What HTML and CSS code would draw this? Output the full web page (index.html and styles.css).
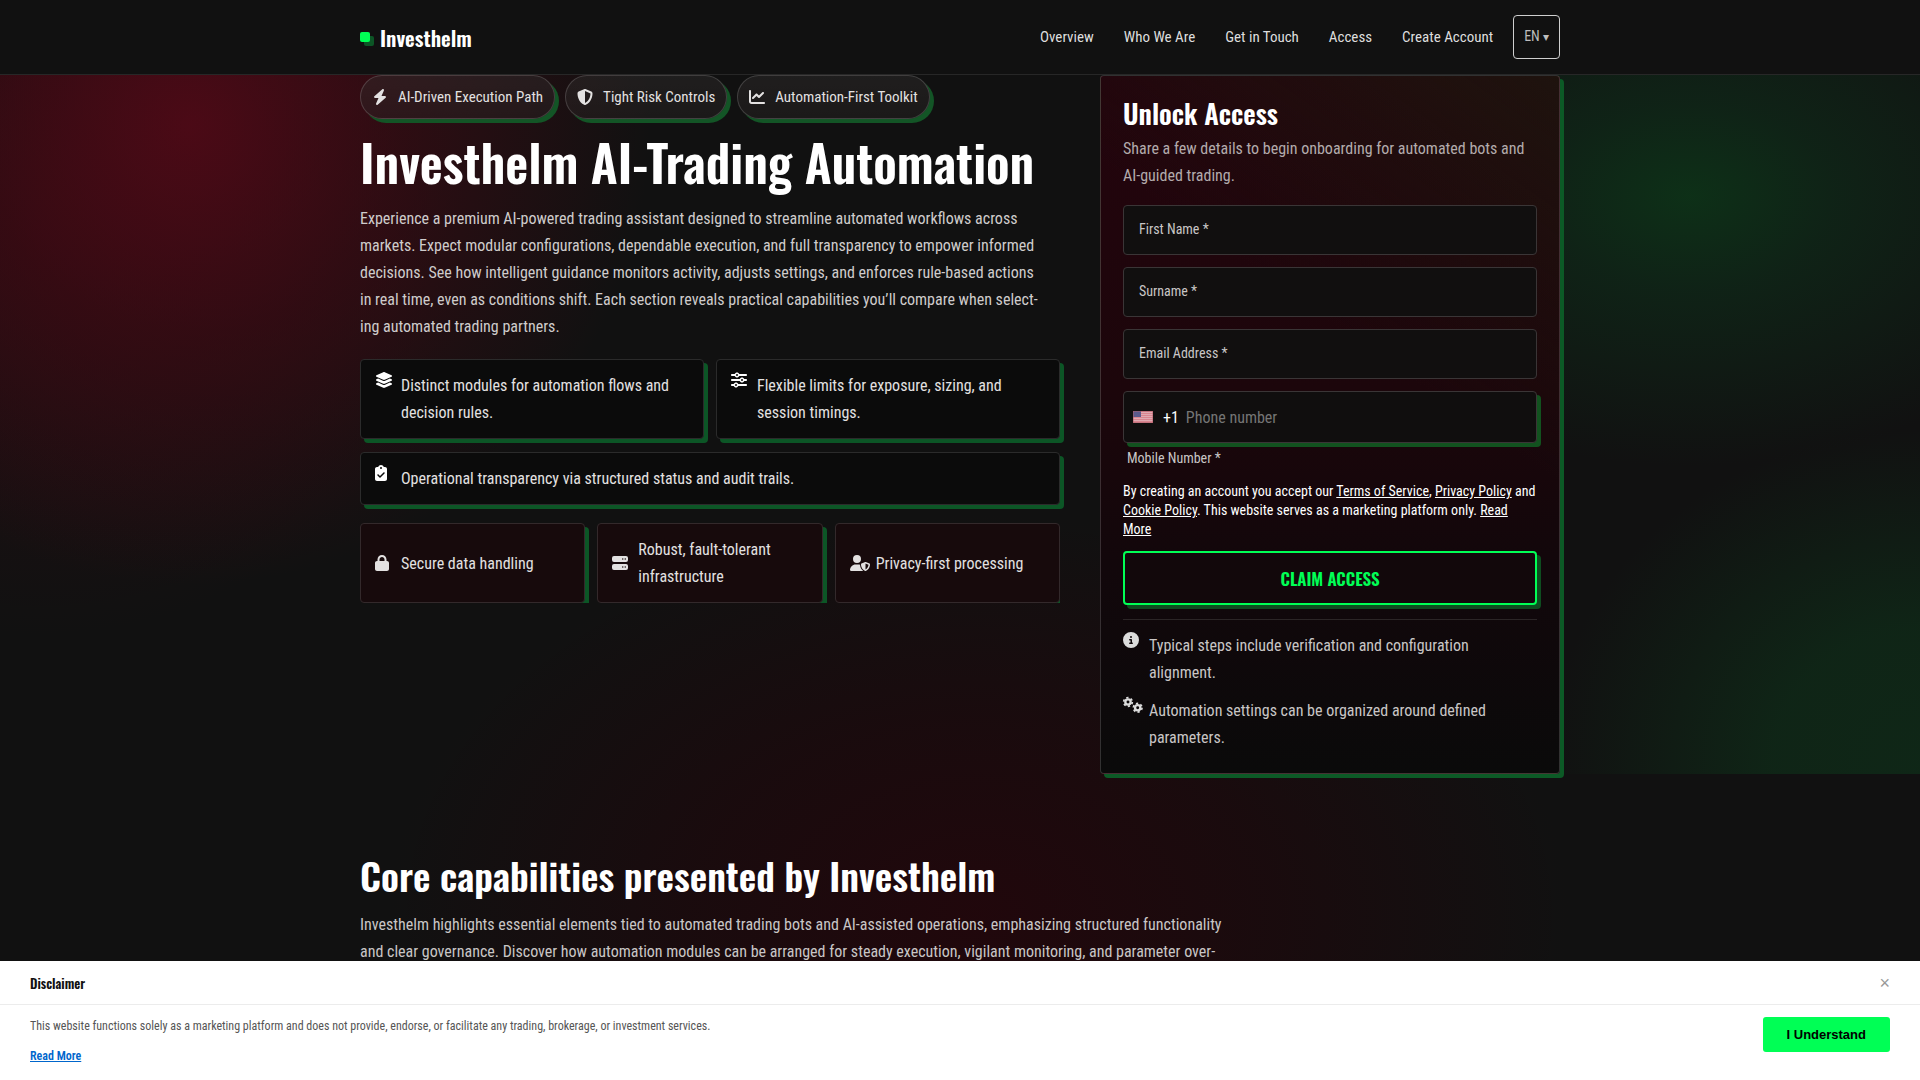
FILE: index.html
```html
<!DOCTYPE html>
<html lang="en">
<head>
    <meta charset="UTF-8">
    <meta name="viewport" content="width=device-width, initial-scale=1.0">
    <title>Investhelm</title>
    <link rel="stylesheet" href="styles.css">
</head>
<body>
    <header class="site-header">
        <div class="container header-inner">
            <a class="brand" href="#"><span class="brand-mark"></span>Investhelm</a>
            <nav class="main-nav">
                <a href="#">Overview</a>
                <a href="#">Who We Are</a>
                <a href="#">Get in Touch</a>
                <a href="#">Access</a>
                <a href="#">Create Account</a>
                <button class="lang-btn" type="button">EN <span class="caret">▾</span></button>
            </nav>
        </div>
    </header>

    <main>
        <section class="hero">
            <div class="container hero-grid">
                <div class="hero-text">
                    <ul class="chips">
                        <li class="chip">
                            <svg class="icon" viewBox="0 0 448 512"><path d="M349.4 44.6c5.9-13.7 1.5-29.7-10.6-38.5s-28.6-8-39.9 1.8l-256 224c-10 8.8-13.6 22.9-8.9 35.3S50.7 288 64 288H175.5L98.6 467.4c-5.9 13.7-1.5 29.7 10.6 38.5s28.6 8 39.9-1.8l256-224c10-8.8 13.6-22.9 8.9-35.3s-16.6-20.7-30-20.7H272.5L349.4 44.6z"/></svg>
                            AI-Driven Execution Path
                        </li>
                        <li class="chip">
                            <svg class="icon" viewBox="0 0 512 512"><path d="M256 0c4.6 0 9.2 1 13.4 2.9L457.7 82.8c22 9.3 38.4 31 38.3 57.2c-.5 99.2-41.3 280.7-213.6 363.2c-16.7 8-36.1 8-52.8 0C57.3 420.7 16.5 239.2 16 140c-.1-26.2 16.3-47.9 38.3-57.2L242.7 2.9C246.8 1 251.4 0 256 0zm0 66.8V444.8C394 378 431.1 230.1 432 141.4L256 66.8l0 0z"/></svg>
                            Tight Risk Controls
                        </li>
                        <li class="chip">
                            <svg class="icon" viewBox="0 0 512 512"><path d="M64 64c0-17.7-14.3-32-32-32S0 46.3 0 64V400c0 44.2 35.8 80 80 80H480c17.7 0 32-14.3 32-32s-14.3-32-32-32H80c-8.8 0-16-7.2-16-16V64zm406.6 86.6c12.5-12.5 12.5-32.8 0-45.3s-32.8-12.5-45.3 0L320 210.7l-57.4-57.4c-12.5-12.5-32.8-12.5-45.3 0l-112 112c-12.5 12.5-12.5 32.8 0 45.3s32.8 12.5 45.3 0L240 221.3l57.4 57.4c12.5 12.5 32.8 12.5 45.3 0l128-128z"/></svg>
                            Automation-First Toolkit
                        </li>
                    </ul>

                    <h1>Investhelm AI-Trading Automation</h1>
                    <p class="lead">Experience a premium AI-powered trading assistant designed to streamline automated workflows across<br>
                        markets. Expect modular configurations, dependable execution, and full transparency to empower informed<br>
                        decisions. See how intelligent guidance monitors activity, adjusts settings, and enforces rule-based actions<br>
                        in real time, even as conditions shift. Each section reveals practical capabilities you’ll compare when select-<br>
                        ing automated trading partners.</p>

                    <ul class="features">
                        <li class="box">
                            <svg class="icon" viewBox="0 0 576 512"><path d="M264.5 5.2c14.9-6.9 32.1-6.9 47 0l218.6 101c8.5 3.9 13.9 12.4 13.9 21.8s-5.4 17.9-13.9 21.8l-218.6 101c-14.9 6.9-32.1 6.9-47 0L45.9 149.8C37.4 145.8 32 137.3 32 128s5.4-17.9 13.9-21.8L264.5 5.2zM476.9 209.6l53.2 24.6c8.5 3.9 13.9 12.4 13.9 21.8s-5.4 17.9-13.9 21.8l-218.6 101c-14.9 6.9-32.1 6.9-47 0L45.9 277.8C37.4 273.8 32 265.3 32 256s5.4-17.9 13.9-21.8l53.2-24.6 152 70.2c23.4 10.8 50.4 10.8 73.8 0l152-70.2zm-152 198.2l152-70.2 53.2 24.6c8.5 3.9 13.9 12.4 13.9 21.8s-5.4 17.9-13.9 21.8l-218.6 101c-14.9 6.9-32.1 6.9-47 0L45.9 405.8C37.4 401.8 32 393.3 32 384s5.4-17.9 13.9-21.8l53.2-24.6 152 70.2c23.4 10.8 50.4 10.8 73.8 0z"/></svg>
                            <span>Distinct modules for automation flows and decision rules.</span>
                        </li>
                        <li class="box">
                            <svg class="icon" viewBox="0 0 512 512"><path d="M0 416c0 17.7 14.3 32 32 32l54.7 0c12.3 28.3 40.5 48 73.3 48s61-19.7 73.3-48L480 448c17.7 0 32-14.3 32-32s-14.3-32-32-32l-246.7 0c-12.3-28.3-40.5-48-73.3-48s-61 19.7-73.3 48L32 384c-17.7 0-32 14.3-32 32zm128 0a32 32 0 1 1 64 0 32 32 0 1 1 -64 0zM320 256a32 32 0 1 1 64 0 32 32 0 1 1 -64 0zm32-80c-32.8 0-61 19.7-73.3 48L32 224c-17.7 0-32 14.3-32 32s14.3 32 32 32l246.7 0c12.3 28.3 40.5 48 73.3 48s61-19.7 73.3-48l54.7 0c17.7 0 32-14.3 32-32s-14.3-32-32-32l-54.7 0c-12.3-28.3-40.5-48-73.3-48zM192 128a32 32 0 1 1 0-64 32 32 0 1 1 0 64zm73.3-64C253 35.7 224.8 16 192 16s-61 19.7-73.3 48L32 64C14.3 64 0 78.3 0 96s14.3 32 32 32l86.7 0c12.3 28.3 40.5 48 73.3 48s61-19.7 73.3-48L480 128c17.7 0 32-14.3 32-32s-14.3-32-32-32L265.3 64z"/></svg>
                            <span>Flexible limits for exposure, sizing, and<br>session timings.</span>
                        </li>
                        <li class="box wide">
                            <svg class="icon" viewBox="0 0 384 512"><path d="M192 0c-41.8 0-77.4 26.7-90.5 64H64C28.7 64 0 92.7 0 128V448c0 35.3 28.7 64 64 64H320c35.3 0 64-28.7 64-64V128c0-35.3-28.7-64-64-64H282.5C269.4 26.7 233.8 0 192 0zm0 64a32 32 0 1 1 0 64 32 32 0 1 1 0-64zM305 273L177 401c-9.4 9.4-24.6 9.4-33.9 0L79 337c-9.4-9.4-9.4-24.6 0-33.9s24.6-9.4 33.9 0l47 47L271 239c9.4-9.4 24.6-9.4 33.9 0s9.4 24.6 0 33.9z"/></svg>
                            <span>Operational transparency via structured status and audit trails.</span>
                        </li>
                    </ul>

                    <ul class="trust">
                        <li class="box">
                            <svg class="icon" viewBox="0 0 448 512"><path d="M144 144v48H304V144c0-44.2-35.8-80-80-80s-80 35.8-80 80zM80 192V144C80 64.5 144.5 0 224 0s144 64.5 144 144v48h16c35.3 0 64 28.7 64 64V448c0 35.3-28.7 64-64 64H64c-35.3 0-64-28.7-64-64V256c0-35.3 28.7-64 64-64H80z"/></svg>
                            <span>Secure data handling</span>
                        </li>
                        <li class="box">
                            <svg class="icon" viewBox="0 0 512 512"><path fill-rule="evenodd" d="M64 32h384a64 64 0 0 1 64 64v64a64 64 0 0 1-64 64H64a64 64 0 0 1-64-64V96a64 64 0 0 1 64-64zm280 72a24 24 0 1 0 0 48 24 24 0 1 0 0-48zm80 0a24 24 0 1 0 0 48 24 24 0 1 0 0-48zM64 288h384a64 64 0 0 1 64 64v64a64 64 0 0 1-64 64H64a64 64 0 0 1-64-64v-64a64 64 0 0 1 64-64zm280 72a24 24 0 1 0 0 48 24 24 0 1 0 0-48zm80 0a24 24 0 1 0 0 48 24 24 0 1 0 0-48z"/></svg>
                            <span>Robust, fault-tolerant infrastructure</span>
                        </li>
                        <li class="box">
                            <svg class="icon" viewBox="0 0 640 512"><path d="M224 256A128 128 0 1 0 224 0a128 128 0 1 0 0 256zm-45.7 48C79.8 304 0 383.8 0 482.3C0 498.7 13.3 512 29.7 512H418.3c1.8 0 3.5-.2 5.3-.5c-76.3-55.1-99.8-141-103.1-200.2c-16.1-4.8-33.1-7.3-50.7-7.3H178.3zm308.8-78.3l-120 48C358 277.4 352 286.2 352 296c0 63.3 25.9 168.8 134.8 214.2c5.9 2.5 12.6 2.5 18.5 0C614.1 464.8 640 359.3 640 296c0-9.8-6-18.6-15.1-22.3l-120-48c-5.7-2.3-12.1-2.3-17.8 0zM591.4 312c-3.9 50.7-27.2 116.7-95.4 149.7V273.8L591.4 312z"/></svg>
                            <span>Privacy-first processing</span>
                        </li>
                    </ul>
                </div>

                <aside class="card">
                    <h2>Unlock Access</h2>
                    <p class="card-intro">Share a few details to begin onboarding for automated bots and<br>AI-guided trading.</p>

                    <form>
                        <div class="field">
                            <input type="text" id="first-name">
                            <label for="first-name">First Name *</label>
                        </div>
                        <div class="field">
                            <input type="text" id="surname">
                            <label for="surname">Surname *</label>
                        </div>
                        <div class="field">
                            <input type="email" id="email">
                            <label for="email">Email Address *</label>
                        </div>
                        <div class="phone">
                            <svg class="flag" viewBox="0 0 20 12">
                                <rect width="20" height="12" fill="#d9858f"/>
                                <path d="M0 1.5h20M0 3.5h20M0 5.5h20M0 7.5h20M0 9.5h20" stroke="#e0aab2" stroke-width="1"/>
                                <rect width="8" height="6" fill="#5b5a8c"/>
                                <path d="M0 0h20v12H0z" fill="none" stroke="#b0616d" stroke-width="1"/>
                            </svg>
                            <span class="dial">+1</span>
                            <input type="tel" id="phone" placeholder="Phone number">
                        </div>
                        <label class="phone-label" for="phone">Mobile Number *</label>

                        <p class="legal">By creating an account you accept our <a href="#">Terms of Service</a>, <a href="#">Privacy Policy</a> and <a href="#">Cookie Policy</a>. This website serves as a marketing platform only. <a href="#">Read<br>More</a></p>
                        <button class="submit" type="button">CLAIM ACCESS</button>
                    </form>

                    <ul class="notes">
                        <li>
                            <svg class="icon" viewBox="0 0 512 512"><path d="M256 512A256 256 0 1 0 256 0a256 256 0 1 0 0 512zM216 336h24V272H216c-13.3 0-24-10.7-24-24s10.7-24 24-24h48c13.3 0 24 10.7 24 24v88h8c13.3 0 24 10.7 24 24s-10.7 24-24 24H216c-13.3 0-24-10.7-24-24s10.7-24 24-24zm40-208a32 32 0 1 1 0 64 32 32 0 1 1 0-64z"/></svg>
                            <span>Typical steps include verification and configuration<br>alignment.</span>
                        </li>
                        <li>
                            <svg class="icon gears" viewBox="0 0 640 512">
                                <circle cx="160" cy="160" r="85"/>
                                <circle class="teeth" cx="160" cy="160" r="138" pathLength="12"/>
                                <circle cx="470" cy="345" r="85"/>
                                <circle class="teeth" cx="470" cy="345" r="138" pathLength="12"/>
                            </svg>
                            <span>Automation settings can be organized around defined<br>parameters.</span>
                        </li>
                    </ul>
                </aside>
            </div>
        </section>

        <section class="core">
            <div class="container">
                <h2>Core capabilities presented by Investhelm</h2>
                <p>Investhelm highlights essential elements tied to automated trading bots and AI-assisted operations, emphasizing structured functionality<br>
                    and clear governance. Discover how automation modules can be arranged for steady execution, vigilant monitoring, and parameter over-</p>
            </div>
        </section>
    </main>

    <!-- Disclaimer bar -->
    <div class="disclaimer">
        <div class="disclaimer-head">
            <h3>Disclaimer</h3>
            <button class="close-btn" type="button" aria-label="Close">×</button>
        </div>
        <div class="disclaimer-body">
            <div>
                <p>This website functions solely as a marketing platform and does not provide, endorse, or facilitate any trading, brokerage, or investment services.</p>
                <a href="#">Read More</a>
            </div>
            <button class="accept-btn" type="button">I Understand</button>
        </div>
    </div>
</body>
</html>
```
FILE: styles.css
```css
* {
    box-sizing: border-box;
    margin: 0;
    padding: 0;
}

body {
    background-color: #111;
    color: #e3e1e1;
    font-family: "Roboto Condensed", Roboto, sans-serif;
    font-size: 16px;
    line-height: 27px;
    text-rendering: optimizeLegibility;
    min-height: 100vh;
    overflow: hidden;
}

/* Red glow behind the lower part of the page */
main {
    background: radial-gradient(ellipse 590px 400px at 51% 840px, rgba(38, 4, 10, 0.75), rgba(34, 5, 10, 0.5) 50%, rgba(17, 17, 17, 0));
}

h1, h2, h3 {
    font-family: Oswald, "Roboto Condensed", sans-serif;
    font-weight: 600;
    color: #fff;
}

ul {
    list-style: none;
}

.container {
    width: 100%;
    max-width: 1200px;
    margin: 0 auto;
}

.icon {
    height: 16px;
    fill: currentColor;
    overflow: visible;
}

/* Header */
.site-header {
    background-color: #111;
    border-bottom: 1px solid #272727;
}

.header-inner {
    display: flex;
    justify-content: space-between;
    align-items: center;
    height: 74px;
}

.brand {
    display: flex;
    align-items: center;
    gap: 10px;
    font-family: Oswald, sans-serif;
    font-size: 21px;
    font-weight: 600;
    color: #fff;
    text-decoration: none;
}

.brand-mark {
    width: 10px;
    height: 10px;
    border-radius: 2px;
    background-color: #00ff55;
    box-shadow: 4px 4px 0 #0c5626;
}

.main-nav {
    display: flex;
    align-items: center;
    gap: 30px;
    font-size: 15px;
}

.main-nav a {
    color: #dedede;
    text-decoration: none;
}

.lang-btn {
    height: 44px;
    padding: 0 10px;
    margin-left: -10px;
    background: none;
    border: 1px solid #cfcfcf;
    border-radius: 4px;
    color: #bdbdbd;
    font: inherit;
    font-size: 14px;
}

.caret {
    font-size: 12px;
}

/* Hero */
.hero {
    background:
        radial-gradient(ellipse 460px 460px at 190px 50px, rgba(94, 8, 24, 0.72), rgba(74, 8, 20, 0.5) 45%, rgba(17, 17, 17, 0)),
        radial-gradient(ellipse 420px 400px at 40px 160px, rgba(60, 8, 18, 0.4), rgba(17, 17, 17, 0)),
        radial-gradient(ellipse 420px 270px at 88% 121px, rgba(12, 60, 26, 0.72), rgba(14, 46, 26, 0.6) 35%, rgba(17, 17, 17, 0)),
        radial-gradient(ellipse 370px 330px at 100% 98%, rgba(14, 50, 26, 0.65), rgba(14, 50, 26, 0.6) 40%, rgba(17, 17, 17, 0));
}

.hero-grid {
    display: grid;
    grid-template-columns: 700fr 460fr;
    gap: 40px;
    align-items: start;
}

.chips {
    display: flex;
    gap: 10px;
}

.chip {
    display: flex;
    align-items: center;
    gap: 10px;
    height: 44px;
    padding: 0 11px;
    border: 1px solid rgba(255, 255, 255, 0.16);
    border-radius: 22px;
    background: linear-gradient(rgba(255, 255, 255, 0.05), rgba(255, 255, 255, 0.03)), rgba(24, 20, 20, 0.4);
    box-shadow: 4px 4px 0 #135526;
    font-size: 15px;
}

.chip .icon {
    width: 16px;
}

h1 {
    margin-top: 12px;
    font-size: 50px;
    line-height: 60px;
}

.lead {
    margin-top: 14px;
    color: #cfcccc;
}

.features {
    display: grid;
    grid-template-columns: 1fr 1fr;
    gap: 13px 12px;
    margin-top: 19px;
}

.box {
    display: grid;
    grid-template-columns: 16px 1fr;
    gap: 10px;
    padding: 12px 14px;
    border: 1px solid #2b2b2b;
    border-radius: 4px;
    background-color: #0b0b0b;
    box-shadow: 4px 4px 0 #0c5626;
}

.features .icon {
    color: #fff;
}

.wide {
    grid-column: 1 / -1;
}

.trust {
    display: grid;
    grid-template-columns: repeat(3, 1fr);
    gap: 12px;
    margin-top: 18px;
    overflow: hidden;
}

.trust .box {
    align-items: center;
    background-color: #170a0c;
    border-color: #33292b;
}

/* Sign-up card */
.card {
    padding: 20px 22px 22px;
    border: 1px solid rgba(255, 255, 255, 0.16);
    border-radius: 4px;
    background:
        linear-gradient(215deg, rgba(28, 24, 14, 0.75), rgba(28, 24, 14, 0) 40%),
        linear-gradient(#24040d, #1c060b 45%, #12070b 70%, #0a0a0a);
    box-shadow: 4px 4px 0 #0c5a26;
}

.card h2 {
    font-size: 27px;
    line-height: 34px;
}

.card-intro {
    margin-top: 5px;
    color: #b3abac;
}

form {
    display: flex;
    flex-direction: column;
    gap: 12px;
    margin-top: 16px;
}

.field {
    position: relative;
}

.field input {
    display: block;
    width: 100%;
    height: 50px;
    padding: 0 15px;
    border: 1px solid #3a3536;
    border-radius: 4px;
    background-color: #110f0f;
    color: #fff;
    font: inherit;
}

.field label {
    position: absolute;
    left: 16px;
    top: 11px;
    font-size: 14px;
    color: #c9c6c6;
}

.phone {
    display: flex;
    align-items: center;
    height: 52px;
    padding: 0 9px;
    border: 1px solid #3a3536;
    border-radius: 4px;
    background-color: #100e0e;
    box-shadow: 4px 4px 0 #12521f;
}

.flag {
    width: 20px;
    height: 12px;
}

.dial {
    margin: 0 7px 0 10px;
    color: #fff;
}

.phone input {
    flex: 1;
    min-width: 0;
    background: none;
    border: none;
    color: #fff;
    font: inherit;
}

.phone input::placeholder {
    color: #757575;
}

.phone-label {
    margin: -8px 4px 0;
    font-size: 14px;
    line-height: 23px;
    color: #c9c6c6;
}

.legal {
    font-size: 14px;
    line-height: 19px;
    color: #fff;
}

.legal a {
    color: #fff;
}

.submit {
    height: 54px;
    border: 2px solid #00ff55;
    border-radius: 4px;
    background-color: #12080b;
    box-shadow: 4px 4px 0 #0e4d20;
    color: #00ff55;
    font-family: Oswald, sans-serif;
    font-size: 17px;
    font-weight: 600;
}

.notes {
    display: grid;
    gap: 11px;
    margin-top: 14px;
    padding-top: 12px;
    border-top: 1px solid #2b2526;
    color: #c9c6c6;
}

.notes li {
    display: grid;
    grid-template-columns: 16px 1fr;
    gap: 10px;
}

.notes .icon {
    color: #dcdcdc;
}

.gears circle {
    fill: none;
    stroke: currentColor;
    stroke-width: 75;
}

.gears .teeth {
    stroke-width: 55;
    stroke-dasharray: 1 1;
}

/* Core capabilities */
.core {
    padding-top: 71px;
    height: 320px;
}

.core h2 {
    font-size: 38px;
    line-height: 60px;
}

.core p {
    margin-top: 6px;
    color: #c9c6c6;
}

/* Disclaimer bar */
.disclaimer {
    position: fixed;
    left: 0;
    right: 0;
    bottom: 0;
    background-color: #fff;
}

.disclaimer-head {
    display: flex;
    justify-content: space-between;
    align-items: center;
    height: 44px;
    padding: 2px 30px 0;
    border-bottom: 1px solid #ececec;
}

.disclaimer-head h3 {
    font-size: 13px;
    color: #111;
}

.close-btn {
    background: none;
    border: none;
    color: #999;
    font-family: "Liberation Sans", Arial, sans-serif;
    font-size: 18px;
}

.disclaimer-body {
    display: flex;
    justify-content: space-between;
    align-items: flex-start;
    padding: 11px 30px 14px;
    font-size: 12px;
    line-height: 20px;
    color: #555;
}

.disclaimer-body a {
    display: inline-block;
    margin-top: 10px;
    color: #0066cc;
    font-weight: 600;
}

.accept-btn {
    height: 35px;
    margin-top: 1px;
    padding: 0 24px;
    border: none;
    border-radius: 3px;
    background-color: #00ff55;
    color: #000;
    font-family: "Liberation Sans", Arial, sans-serif;
    font-size: 13px;
    font-weight: 700;
}
```
